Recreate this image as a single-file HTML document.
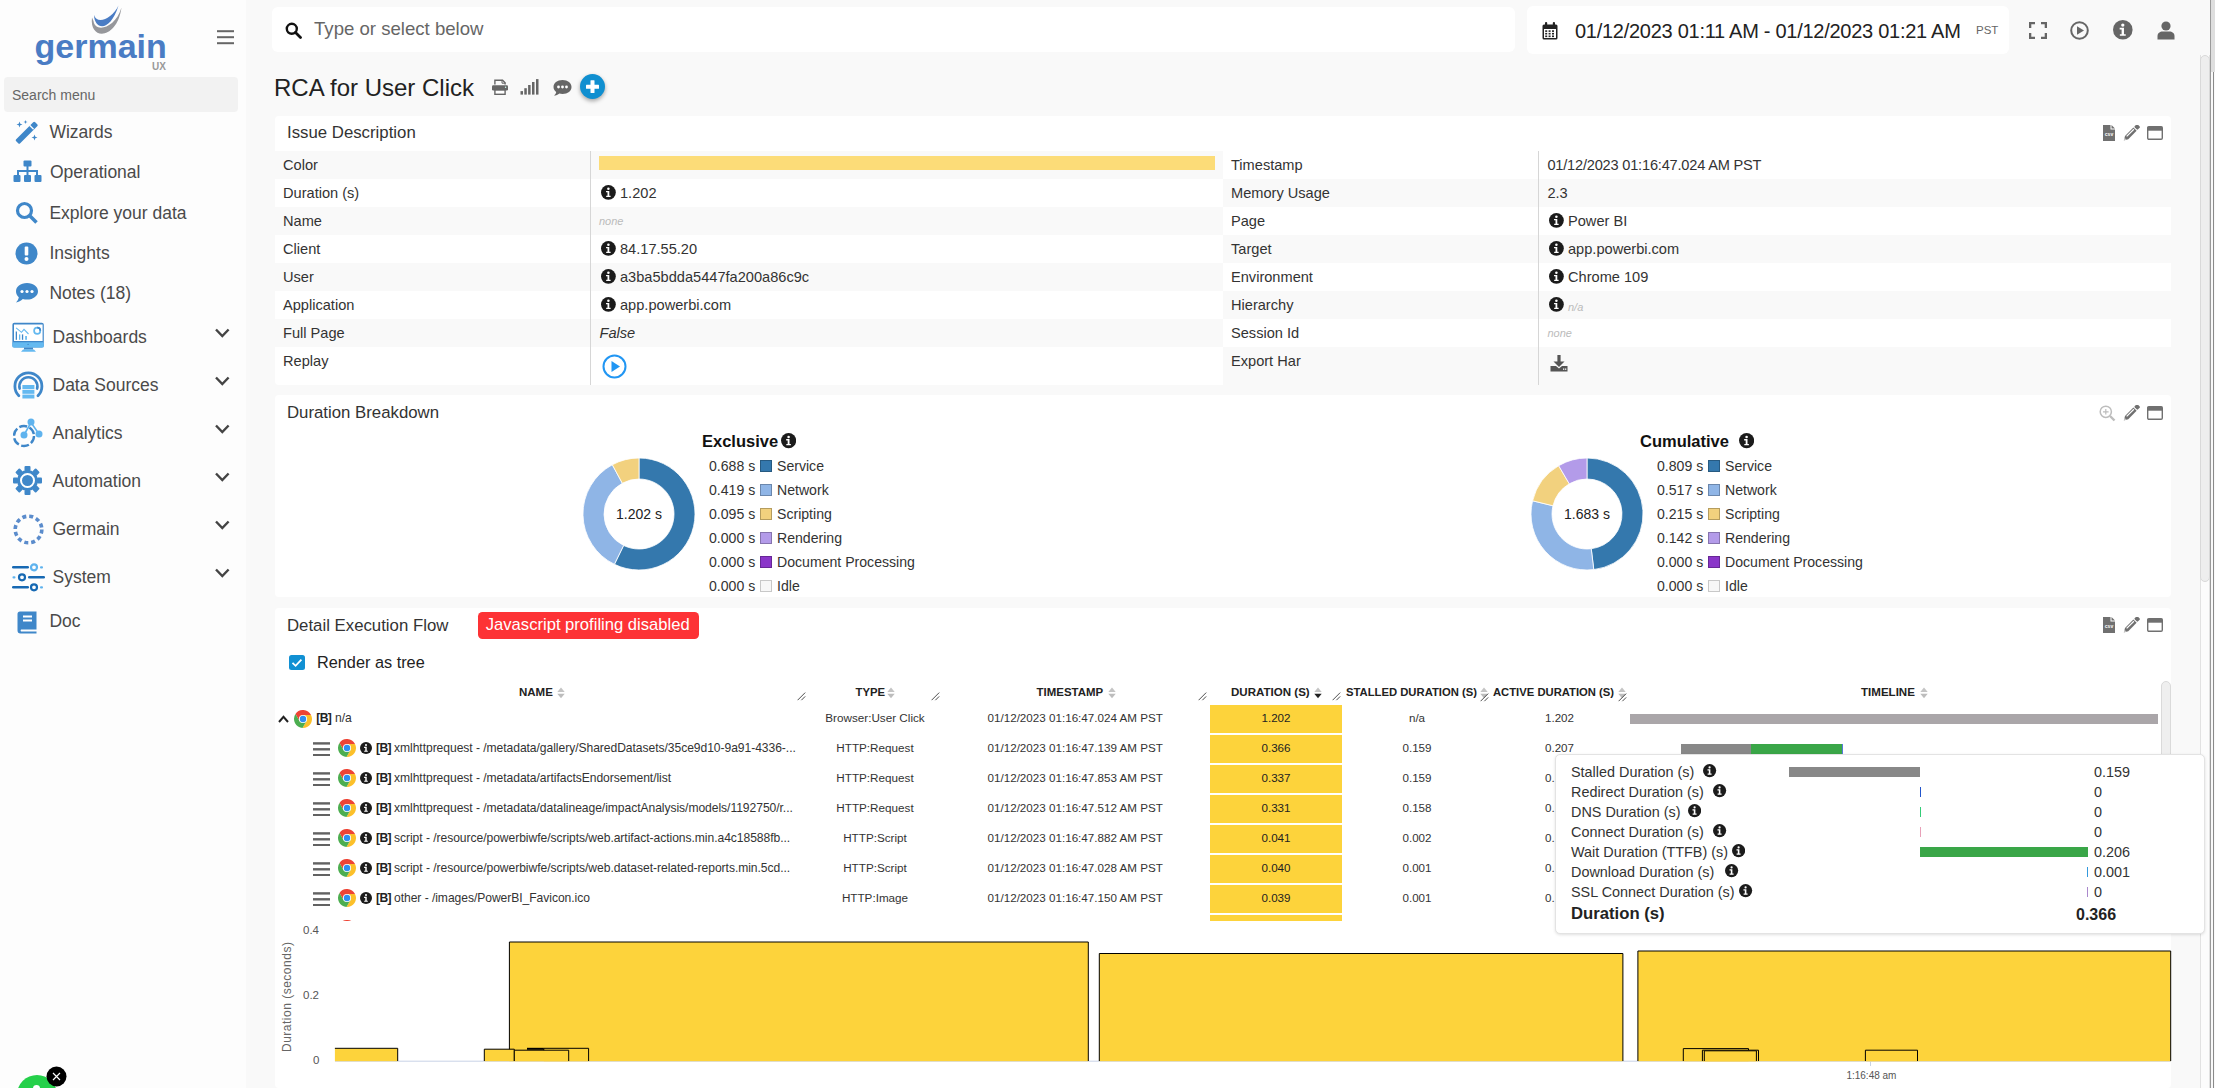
<!DOCTYPE html>
<html><head><meta charset="utf-8">
<style>
*{box-sizing:border-box;margin:0;padding:0}
html,body{width:2215px;height:1088px;overflow:hidden}
body{background:#f9f9f9;font-family:"Liberation Sans",sans-serif;color:#333;position:relative}
.a{position:absolute}
#side{left:0;top:0;width:246px;height:1088px;background:#fdfdfd}
.mi{position:absolute;left:0;font-size:17.5px;line-height:1;color:#4a4a4a;white-space:nowrap}
.chev{position:absolute;left:216px;width:10px;height:10px;border-right:2.5px solid #444;border-bottom:2.5px solid #444;transform:rotate(45deg)}
.panel{position:absolute;background:#fff;border-radius:4px}
.ptitle{position:absolute;left:12px;font-size:16px;color:#333;white-space:nowrap}
.row{position:absolute;height:28px}
.lbl{position:absolute;font-size:14px;color:#333;white-space:nowrap}
.ii{position:absolute;width:14px;height:14px;border-radius:50%;background:#1a1a1a;color:#fff;font:bold 10px/14px "Liberation Serif",serif;text-align:center}
</style></head><body>
<div id="side" class="a">
<svg class="a" style="left:30px;top:0px" width="142" height="70" viewBox="0 0 142 70">
<path d="M64 15 C64.5 30 80 33 88.5 5.5 C82 19 67 25 64 15 Z" fill="#4a7cc4"/>
<path d="M62 17.5 C59 41 87 40 91.5 7.5 C85 29 65 33 63.5 21 Z" fill="#96979b"/>
</svg>
<div class="a" style="left:34.5px;top:29px;font:bold 34px/1 'Liberation Sans',sans-serif;color:#4a7cc4;letter-spacing:0px">germain</div>
<div class="a" style="left:152px;top:61.5px;font:bold 10px/1 'Liberation Sans',sans-serif;color:#999">UX</div>
<svg class="a" style="left:216px;top:29px" width="19" height="16" viewBox="0 0 19 16"><rect x="1" y="1.2" width="17" height="2" fill="#666"/><rect x="1" y="7.2" width="17" height="2" fill="#666"/><rect x="1" y="13.2" width="17" height="2" fill="#666"/></svg>
<div class="a" style="left:4px;top:77px;width:234px;height:34.5px;background:#f2f2f2;border-radius:4px"></div>
<div class="a" style="left:12px;top:87.5px;font:14px/1 'Liberation Sans',sans-serif;color:#666">Search menu</div>
<!-- icons -->
<svg class="a" style="left:15px;top:120px" width="24" height="24" viewBox="0 0 24 24" fill="#3f87c9">
<path d="M1.2 19.2 L18.2 2.2 Q19.2 1.2 20.2 2.2 L22.2 4.2 Q23.2 5.2 22.2 6.2 L5.2 23.2 Q4.2 24.2 3.2 23.2 L1.2 21.2 Q0.2 20.2 1.2 19.2Z"/>
<path d="M14.6 5.2 L18.6 9.2" stroke="#fdfdfd" stroke-width="1.3"/>
<path d="M4.5 1.5 L5.3 3.7 L7.5 4.5 L5.3 5.3 L4.5 7.5 L3.7 5.3 L1.5 4.5 L3.7 3.7Z"/>
<path d="M10.5 0 L11 1.5 L12.5 2 L11 2.5 L10.5 4 L10 2.5 L8.5 2 L10 1.5Z"/>
<path d="M19.5 14.5 L20.3 16.7 L22.5 17.5 L20.3 18.3 L19.5 20.5 L18.7 18.3 L16.5 17.5 L18.7 16.7Z"/>
</svg>
<svg class="a" style="left:12.5px;top:160px" width="29" height="23" viewBox="0 0 29 23" fill="#3f87c9">
<rect x="10.5" y="0.5" width="8" height="6" rx="1"/><rect x="13.5" y="6" width="2" height="5"/>
<rect x="4" y="10" width="21" height="2"/><rect x="4" y="10" width="2" height="5"/><rect x="13.5" y="10" width="2" height="5"/><rect x="23" y="10" width="2" height="5"/>
<rect x="0.5" y="15" width="7" height="7" rx="1"/><rect x="11" y="15" width="7" height="7" rx="1"/><rect x="21.5" y="15" width="7" height="7" rx="1"/>
</svg>
<svg class="a" style="left:15px;top:201px" width="24" height="24" viewBox="0 0 24 24"><circle cx="9.5" cy="9.5" r="7" fill="none" stroke="#3f87c9" stroke-width="3.2"/><path d="M14.5 14.5 L21.5 21.5" stroke="#3f87c9" stroke-width="3.6"/></svg>
<svg class="a" style="left:15px;top:241.5px" width="23" height="23" viewBox="0 0 23 23"><circle cx="11.5" cy="11.5" r="11" fill="#3f87c9"/><rect x="9.7" y="4.5" width="3.6" height="9" rx="1" fill="#fff"/><circle cx="11.5" cy="17" r="2" fill="#fff"/></svg>
<svg class="a" style="left:15px;top:282px" width="24" height="22" viewBox="0 0 24 22"><path d="M12 1 C18.6 1 23 4.8 23 9.3 C23 13.8 18.6 17.6 12 17.6 C10.5 17.6 9 17.4 7.8 17 C6 18.6 3.5 20 1 20.5 C2.5 19 3.6 17 3.8 15.3 C2 13.8 1 11.7 1 9.3 C1 4.8 5.4 1 12 1Z" fill="#3f87c9"/><circle cx="7" cy="9.5" r="1.6" fill="#fff"/><circle cx="12" cy="9.5" r="1.6" fill="#fff"/><circle cx="17" cy="9.5" r="1.6" fill="#fff"/></svg>
<svg class="a" style="left:12px;top:322px" width="33" height="31" viewBox="0 0 33 31">
<rect x="0.4" y="0.8" width="31.4" height="24.8" rx="2" fill="#3f87c9"/><rect x="2" y="2.5" width="28.6" height="16.5" fill="#fff"/>
<rect x="0.4" y="20.3" width="31.4" height="5.3" rx="1" fill="#64b9f0"/><circle cx="16.1" cy="22.4" r="0.7" fill="#3f87c9"/>
<rect x="12" y="25.6" width="9" height="2" fill="#3f87c9"/><path d="M9 29.8 L11 27.5 H22 L24 29.8Z" fill="#64b9f0"/>
<path d="M4.1 5.8 L9.5 10.3 L12 7.4 L16.5 12" fill="none" stroke="#64b9f0" stroke-width="1.1"/>
<rect x="3.7" y="9.5" width="1.3" height="8.3" fill="#3f87c9"/><rect x="7" y="12.4" width="1.3" height="5.4" fill="#64b9f0"/><rect x="9.9" y="12.4" width="1.3" height="5.4" fill="#3f87c9"/><rect x="13.2" y="14" width="1.7" height="3.8" fill="#64b9f0"/>
<circle cx="25.2" cy="8.7" r="3.1" fill="none" stroke="#64b9f0" stroke-width="1.7"/><path d="M25.2 5.6 A3.1 3.1 0 0 1 28.3 8.7" fill="none" stroke="#3f87c9" stroke-width="1.7"/>
</svg>
<svg class="a" style="left:12.5px;top:370px" width="31" height="30" viewBox="0 0 31 30">
<path d="M5.85 25.85 A13.5 13.5 0 1 1 24.95 25.85" fill="none" stroke="#3f87c9" stroke-width="2.8" stroke-linecap="round"/>
<path d="M6.7 18.6 A9 9 0 1 1 24.1 18.6" fill="none" stroke="#3f87c9" stroke-width="2.6" stroke-linecap="round"/>
<rect x="9.4" y="15" width="12" height="4" fill="#64b9f0"/><rect x="9.4" y="19.8" width="12" height="4" fill="#64b9f0"/><rect x="9.4" y="24.6" width="12" height="3.9" fill="#64b9f0"/>
</svg>
<svg class="a" style="left:12.5px;top:418px" width="31" height="30" viewBox="0 0 31 30">
<circle cx="11" cy="18" r="10" fill="none" stroke="#3f87c9" stroke-width="2.4" stroke-dasharray="8 2.5"/>
<path d="M11 17 L18 4.5 L26 16" fill="none" stroke="#5fb3ee" stroke-width="1.6"/>
<circle cx="18" cy="4" r="3.5" fill="#5fb3ee"/><circle cx="11" cy="17" r="3.5" fill="#5fb3ee"/><circle cx="26" cy="16" r="3.5" fill="#5fb3ee"/>
</svg>
<svg class="a" style="left:13px;top:466px" width="29" height="29" viewBox="0 0 29 29">
<g fill="#3f87c9"><circle cx="14.5" cy="14.5" r="10.5"/>
<rect x="11.5" y="0" width="6" height="5" rx="1"/><rect x="11.5" y="24" width="6" height="5" rx="1"/><rect x="0" y="11.5" width="5" height="6" rx="1"/><rect x="24" y="11.5" width="5" height="6" rx="1"/>
<rect x="11.5" y="0" width="6" height="5" rx="1" transform="rotate(45 14.5 14.5)"/><rect x="11.5" y="24" width="6" height="5" rx="1" transform="rotate(45 14.5 14.5)"/><rect x="0" y="11.5" width="5" height="6" rx="1" transform="rotate(45 14.5 14.5)"/><rect x="24" y="11.5" width="5" height="6" rx="1" transform="rotate(45 14.5 14.5)"/></g>
<circle cx="14.5" cy="14.5" r="6.5" fill="none" stroke="#fff" stroke-width="2"/>
</svg>
<svg class="a" style="left:12.5px;top:513.5px" width="31" height="31" viewBox="0 0 31 31"><circle cx="15.5" cy="15.5" r="13.3" fill="none" stroke="#5b8ccc" stroke-width="3.6" stroke-dasharray="4 3"/></svg>
<svg class="a" style="left:11.5px;top:562.5px" width="33" height="29" viewBox="0 0 33 29">
<rect x="0" y="3" width="17" height="2.6" rx="1.3" fill="#1769b3"/><circle cx="22" cy="4.3" r="3" fill="none" stroke="#5fb3ee" stroke-width="2.2"/><rect x="28" y="3.2" width="3" height="2.2" rx="1" fill="#5fb3ee"/>
<rect x="0.5" y="13.2" width="3" height="2.2" rx="1" fill="#5fb3ee"/><circle cx="10" cy="14.3" r="3" fill="none" stroke="#1769b3" stroke-width="2.2"/><rect x="16" y="13" width="17" height="2.6" rx="1.3" fill="#1769b3"/>
<rect x="0" y="23" width="17" height="2.6" rx="1.3" fill="#1769b3"/><circle cx="22" cy="24.3" r="3" fill="none" stroke="#1769b3" stroke-width="2.2"/><rect x="28" y="23.2" width="3" height="2.2" rx="1" fill="#5fb3ee"/>
</svg>
<svg class="a" style="left:17px;top:610.5px" width="20" height="23" viewBox="0 0 20 23">
<path d="M3 0.5 H19.5 V18.5 H4 A1.5 1.5 0 0 0 4 20.5 H19.5 V22.5 H3.5 A3 3 0 0 1 0.5 19.5 V3 A2.5 2.5 0 0 1 3 0.5Z" fill="#3f87c9"/>
<rect x="6" y="4.5" width="9" height="2" fill="#fff"/><rect x="6" y="8.5" width="9" height="2" fill="#fff"/>
</svg>
<!-- chevrons -->
<svg class="a" style="left:215px;top:328px" width="15" height="275" viewBox="0 0 15 275" fill="none" stroke="#444" stroke-width="2.4">
<path d="M1 1.5 L7.3 8 L13.6 1.5"/><path d="M1 49.5 L7.3 56 L13.6 49.5"/><path d="M1 97.5 L7.3 104 L13.6 97.5"/><path d="M1 145.5 L7.3 152 L13.6 145.5"/><path d="M1 193.5 L7.3 200 L13.6 193.5"/><path d="M1 241.5 L7.3 248 L13.6 241.5"/>
</svg>
<div class="mi" style="left:49.4px;top:123.8px">Wizards</div>
<div class="mi" style="left:50px;top:164.3px">Operational</div>
<div class="mi" style="left:49.4px;top:205.3px">Explore your data</div>
<div class="mi" style="left:49.4px;top:245.3px">Insights</div>
<div class="mi" style="left:49.4px;top:285.3px">Notes (18)</div>
<div class="mi" style="left:52.5px;top:329.3px">Dashboards</div>
<div class="mi" style="left:52.5px;top:377.3px">Data Sources</div>
<div class="mi" style="left:52.5px;top:425.3px">Analytics</div>
<div class="mi" style="left:52.5px;top:473.3px">Automation</div>
<div class="mi" style="left:52.5px;top:521.3px">Germain</div>
<div class="mi" style="left:52.5px;top:569.3px">System</div>
<div class="mi" style="left:49.4px;top:613.3px">Doc</div>
<!-- chat bubble -->
<div class="a" style="left:17px;top:1075px;width:40px;height:40px;border-radius:50%;background:#25d04a"></div>
<div class="a" style="left:33px;top:1085px;width:7px;height:7px;border-radius:50%;background:#fff"></div>
<svg class="a" style="left:46px;top:1066px" width="21" height="21" viewBox="0 0 21 21"><circle cx="10.5" cy="10.5" r="10" fill="#000"/><path d="M7 7 L14 14 M14 7 L7 14" stroke="#fff" stroke-width="1.2"/></svg>
</div>
<div id="main"><svg width="0" height="0" style="position:absolute"><defs><symbol id="chr" viewBox="0 0 18 18"><path d="M9 9 L5.49 11.03 L1.47 4.07 A9 9 0 0 1 17.04 4.95 L9 4.95Z" fill="#ee4435"/><path d="M9 9 L9 4.95 L17.04 4.95 A9 9 0 0 1 8.49 17.98 L12.51 11.03Z" fill="#fcc02a"/><path d="M9 9 L12.51 11.03 L8.49 17.98 A9 9 0 0 1 1.47 4.07 L5.49 11.03Z" fill="#4cae50"/><circle cx="9" cy="9" r="4.1" fill="#fff"/><circle cx="9" cy="9" r="3.2" fill="#2f8ff0"/></symbol></defs></svg><div class="a" style="left:272px;top:7px;width:1243px;height:45px;background:#fff;border-radius:6px"></div><svg class="a" style="left:285px;top:22px" width="17" height="17" viewBox="0 0 17 17"><circle cx="6.8" cy="6.8" r="5" fill="none" stroke="#111" stroke-width="2.4"/><path d="M10.5 10.5 L15.5 15.5" stroke="#111" stroke-width="2.8" stroke-linecap="round"/></svg><div class="a" style="left:314.0px;top:20.1px;font-size:18.6px;line-height:1;color:#666;white-space:nowrap;">Type or select below</div><div class="a" style="left:1527px;top:5.5px;width:482px;height:48.5px;background:#fff;border-radius:6px"></div><svg class="a" style="left:1542px;top:22px" width="16" height="18" viewBox="0 0 16 18"><rect x="3" y="0" width="2.2" height="4" rx="1" fill="#222"/><rect x="10.8" y="0" width="2.2" height="4" rx="1" fill="#222"/><rect x="0.5" y="2.5" width="15" height="15" rx="1.5" fill="#222"/><rect x="2" y="7" width="12" height="9" fill="#fff"/><rect x="3.2" y="8.3" width="2" height="1.6" fill="#222"/><rect x="3.2" y="10.9" width="2" height="1.6" fill="#222"/><rect x="3.2" y="13.5" width="2" height="1.6" fill="#222"/><rect x="6.6" y="8.3" width="2" height="1.6" fill="#222"/><rect x="6.6" y="10.9" width="2" height="1.6" fill="#222"/><rect x="6.6" y="13.5" width="2" height="1.6" fill="#222"/><rect x="10.0" y="8.3" width="2" height="1.6" fill="#222"/><rect x="10.0" y="10.9" width="2" height="1.6" fill="#222"/><rect x="10.0" y="13.5" width="2" height="1.6" fill="#222"/></svg><div class="a" style="left:1575.0px;top:20.9px;font-size:20px;line-height:1;color:#222;white-space:nowrap;letter-spacing:-0.27px;">01/12/2023 01:11 AM - 01/12/2023 01:21 AM</div><div class="a" style="left:1976.0px;top:24.8px;font-size:11.5px;line-height:1;color:#666;white-space:nowrap;">PST</div><svg class="a" style="left:2029px;top:22px" width="18" height="17" viewBox="0 0 18 17"><path d="M1 6 V1 H6 M12 1 H17 V6 M17 11 V16 H12 M6 16 H1 V11" fill="none" stroke="#666" stroke-width="2.6"/></svg><svg class="a" style="left:2070px;top:21px" width="19" height="19" viewBox="0 0 19 19"><circle cx="9.5" cy="9.5" r="8.3" fill="none" stroke="#666" stroke-width="2"/><path d="M7 5.2 L14 9.5 L7 13.8Z" fill="#666"/></svg><svg class="a" style="left:2113.2px;top:20.4px" width="19.6" height="19.6" viewBox="0 0 19.6 19.6"><circle cx="9.8" cy="9.8" r="9.8" fill="#666"/><circle cx="9.8" cy="5.10" r="1.67" fill="#fff"/><path d="M6.66 7.84 H10.98 V14.21 H12.74 V15.88 H6.86 V14.21 H8.62 V9.60 H6.66Z" fill="#fff"/></svg><svg class="a" style="left:2157px;top:21px" width="18" height="19" viewBox="0 0 18 19"><circle cx="9" cy="5" r="4.6" fill="#666"/><path d="M0.5 18.5 V15 C0.5 12 3 10.5 5.5 10.5 H12.5 C15 10.5 17.5 12 17.5 15 V18.5Z" fill="#666"/></svg><div class="a" style="left:2200px;top:55px;width:10px;height:1040px;background:#fcfcfc;border-left:1px solid #e2e2e2;border-right:1px solid #e2e2e2"></div><div class="a" style="left:2200px;top:55px;width:10px;height:527px;background:#eeeeee;border:1px solid #d9d9d9;border-radius:5px"></div><div class="a" style="left:2210px;top:0px;width:1.2px;height:1088px;background:#9a9a9a;"></div><div class="a" style="left:2211.2px;top:0px;width:3.8px;height:72px;background:#dedede;"></div><div class="a" style="left:2213px;top:72px;width:1.2px;height:1016px;background:#8a8a8a;"></div><div class="a" style="left:274.0px;top:75.7px;font-size:24px;line-height:1;color:#222;white-space:nowrap;">RCA for User Click</div><svg class="a" style="left:492px;top:79px" width="16" height="16" viewBox="0 0 16 16"><path d="M2.9 5.6 V1.2 H10.6 L13.1 3.7 V5.6" fill="none" stroke="#666" stroke-width="1.4"/><path d="M10 0.9 V4.2 H13.1" fill="none" stroke="#666" stroke-width="1"/><rect x="0" y="6.2" width="16" height="5.2" rx="1.2" fill="#666"/><circle cx="13.6" cy="8.2" r="0.7" fill="#cfe"/><rect x="2.9" y="11" width="10.2" height="4.3" fill="#fff" stroke="#666" stroke-width="1.4"/></svg><svg class="a" style="left:520px;top:79px" width="20" height="16" viewBox="0 0 20 16"><rect x="0.5" y="12.1" width="2.5" height="3.5" fill="#666"/><rect x="4.3" y="9.2" width="2.5" height="6.4" fill="#666"/><rect x="8.1" y="6" width="2.5" height="9.6" fill="#666"/><rect x="12" y="3" width="2.5" height="12.6" fill="#666"/><rect x="16" y="0.1" width="2.5" height="15.5" fill="#666"/></svg><svg class="a" style="left:553px;top:79.3px" width="19" height="17" viewBox="0 0 19 17"><path d="M9.5 1 C14.8 1 18.5 4.2 18.5 8 C18.5 11.8 14.8 15 9.5 15 C8.4 15 7.4 14.8 6.4 14.5 C5 15.6 3 16.5 1 16.6 C2.3 15.6 3 14.3 3.2 13 C1.6 11.7 0.5 10 0.5 8 C0.5 4.2 4.2 1 9.5 1Z" fill="#666"/><circle cx="5.5" cy="8" r="1.4" fill="#fff"/><circle cx="9.5" cy="8" r="1.4" fill="#fff"/><circle cx="13.5" cy="8" r="1.4" fill="#fff"/></svg><div class="a" style="left:580px;top:74px;width:25px;height:25px;border-radius:50%;background:#108fd0;box-shadow:0 2px 4px rgba(0,0,0,0.35)"></div><svg class="a" style="left:585px;top:79px" width="15" height="15" viewBox="0 0 15 15"><rect x="5.5" y="1.3" width="4" height="12.6" rx="0.5" fill="#fff"/><rect x="1" y="5.7" width="13" height="4" rx="0.5" fill="#fff"/></svg><div class="a" style="left:275px;top:116px;width:1896px;height:269px;background:#fff;border-radius:4px"></div><div class="a" style="left:287.0px;top:124.8px;font-size:16.8px;line-height:1;color:#333;white-space:nowrap;">Issue Description</div><svg class="a" style="left:2103px;top:125px" width="13" height="16" viewBox="0 0 13 16"><path d="M0 0 H7.5 V4.5 H12 V16 H0Z" fill="#707070"/><path d="M8.5 0 L12 3.5 H8.5Z" fill="#707070"/><text x="6" y="11.2" font-family="Liberation Sans" font-size="5" font-weight="bold" fill="#fff" text-anchor="middle">csv</text></svg><svg class="a" style="left:2123px;top:125px" width="17" height="16" viewBox="0 0 17 16"><g transform="translate(8.3 7.9) rotate(-45)"><path d="M-10.6 0 L-6.6 -2.3 H5.2 V2.3 H-6.6Z" fill="#707070"/><rect x="6.3" y="-2.3" width="4.2" height="4.6" rx="1" fill="#707070"/><rect x="-5.8" y="-1.3" width="10.2" height="1.1" fill="#fff"/><path d="M-10.6 0 L-8.2 -1.4 V1.4Z" fill="#fff" opacity="0.6"/></g></svg><svg class="a" style="left:2147px;top:126px" width="16" height="14" viewBox="0 0 16 14"><rect x="0.7" y="0.7" width="14.6" height="12.6" rx="1.2" fill="none" stroke="#707070" stroke-width="1.4"/><rect x="0.7" y="0.7" width="14.6" height="4" fill="#707070"/></svg><div class="a" style="left:275px;top:151px;width:948px;height:28px;background:#f9f9f9;"></div><div class="a" style="left:1223px;top:179px;width:948px;height:28px;background:#f9f9f9;"></div><div class="a" style="left:275px;top:207px;width:948px;height:28px;background:#f9f9f9;"></div><div class="a" style="left:1223px;top:235px;width:948px;height:28px;background:#f9f9f9;"></div><div class="a" style="left:275px;top:263px;width:948px;height:28px;background:#f9f9f9;"></div><div class="a" style="left:1223px;top:291px;width:948px;height:28px;background:#f9f9f9;"></div><div class="a" style="left:275px;top:319px;width:948px;height:28px;background:#f9f9f9;"></div><div class="a" style="left:1223px;top:347px;width:948px;height:38px;background:#f9f9f9;"></div><div class="a" style="left:590px;top:151px;width:1px;height:234px;background:#d6d6d6;"></div><div class="a" style="left:1538px;top:151px;width:1px;height:234px;background:#d6d6d6;"></div><div class="a" style="left:283.0px;top:157.9px;font-size:14.6px;line-height:1;color:#333;white-space:nowrap;">Color</div><div class="a" style="left:1231.0px;top:157.9px;font-size:14.6px;line-height:1;color:#333;white-space:nowrap;">Timestamp</div><div class="a" style="left:283.0px;top:185.9px;font-size:14.6px;line-height:1;color:#333;white-space:nowrap;">Duration (s)</div><div class="a" style="left:1231.0px;top:185.9px;font-size:14.6px;line-height:1;color:#333;white-space:nowrap;">Memory Usage</div><div class="a" style="left:283.0px;top:213.9px;font-size:14.6px;line-height:1;color:#333;white-space:nowrap;">Name</div><div class="a" style="left:1231.0px;top:213.9px;font-size:14.6px;line-height:1;color:#333;white-space:nowrap;">Page</div><div class="a" style="left:283.0px;top:241.9px;font-size:14.6px;line-height:1;color:#333;white-space:nowrap;">Client</div><div class="a" style="left:1231.0px;top:241.9px;font-size:14.6px;line-height:1;color:#333;white-space:nowrap;">Target</div><div class="a" style="left:283.0px;top:269.9px;font-size:14.6px;line-height:1;color:#333;white-space:nowrap;">User</div><div class="a" style="left:1231.0px;top:269.9px;font-size:14.6px;line-height:1;color:#333;white-space:nowrap;">Environment</div><div class="a" style="left:283.0px;top:297.9px;font-size:14.6px;line-height:1;color:#333;white-space:nowrap;">Application</div><div class="a" style="left:1231.0px;top:297.9px;font-size:14.6px;line-height:1;color:#333;white-space:nowrap;">Hierarchy</div><div class="a" style="left:283.0px;top:325.9px;font-size:14.6px;line-height:1;color:#333;white-space:nowrap;">Full Page</div><div class="a" style="left:1231.0px;top:325.9px;font-size:14.6px;line-height:1;color:#333;white-space:nowrap;">Session Id</div><div class="a" style="left:283.0px;top:353.9px;font-size:14.6px;line-height:1;color:#333;white-space:nowrap;">Replay</div><div class="a" style="left:1231.0px;top:353.9px;font-size:14.6px;line-height:1;color:#333;white-space:nowrap;">Export Har</div><div class="a" style="left:599px;top:156px;width:616px;height:14px;background:#fcdc78;"></div><svg class="a" style="left:601.1px;top:185.4px" width="14.8" height="14.8" viewBox="0 0 14.8 14.8"><circle cx="7.4" cy="7.4" r="7.4" fill="#1b1b1b"/><circle cx="7.4" cy="3.85" r="1.26" fill="#fff"/><path d="M5.03 5.92 H8.29 V10.73 H9.62 V11.99 H5.18 V10.73 H6.51 V7.25 H5.03Z" fill="#fff"/></svg><div class="a" style="left:620.0px;top:185.9px;font-size:14.6px;line-height:1;color:#333;white-space:nowrap;">1.202</div><svg class="a" style="left:601.1px;top:241.4px" width="14.8" height="14.8" viewBox="0 0 14.8 14.8"><circle cx="7.4" cy="7.4" r="7.4" fill="#1b1b1b"/><circle cx="7.4" cy="3.85" r="1.26" fill="#fff"/><path d="M5.03 5.92 H8.29 V10.73 H9.62 V11.99 H5.18 V10.73 H6.51 V7.25 H5.03Z" fill="#fff"/></svg><div class="a" style="left:620.0px;top:241.9px;font-size:14.6px;line-height:1;color:#333;white-space:nowrap;">84.17.55.20</div><svg class="a" style="left:601.1px;top:269.40000000000003px" width="14.8" height="14.8" viewBox="0 0 14.8 14.8"><circle cx="7.4" cy="7.4" r="7.4" fill="#1b1b1b"/><circle cx="7.4" cy="3.85" r="1.26" fill="#fff"/><path d="M5.03 5.92 H8.29 V10.73 H9.62 V11.99 H5.18 V10.73 H6.51 V7.25 H5.03Z" fill="#fff"/></svg><div class="a" style="left:620.0px;top:269.9px;font-size:14.6px;line-height:1;color:#333;white-space:nowrap;">a3ba5bdda5447fa200a86c9c</div><svg class="a" style="left:601.1px;top:297.40000000000003px" width="14.8" height="14.8" viewBox="0 0 14.8 14.8"><circle cx="7.4" cy="7.4" r="7.4" fill="#1b1b1b"/><circle cx="7.4" cy="3.85" r="1.26" fill="#fff"/><path d="M5.03 5.92 H8.29 V10.73 H9.62 V11.99 H5.18 V10.73 H6.51 V7.25 H5.03Z" fill="#fff"/></svg><div class="a" style="left:620.0px;top:297.9px;font-size:14.6px;line-height:1;color:#333;white-space:nowrap;">app.powerbi.com</div><div class="a" style="left:599.0px;top:216.2px;font-size:11px;line-height:1;color:#bbb;white-space:nowrap;font-style:italic;">none</div><div class="a" style="left:599.5px;top:325.9px;font-size:14.6px;line-height:1;color:#333;white-space:nowrap;font-style:italic;">False</div><svg class="a" style="left:602px;top:354px" width="25" height="25" viewBox="0 0 25 25"><circle cx="12.5" cy="12.5" r="11" fill="none" stroke="#2196f3" stroke-width="2"/><path d="M9.5 7 L18 12.5 L9.5 18Z" fill="#2196f3"/></svg><div class="a" style="left:1547.4px;top:158.0px;font-size:14.6px;line-height:1;color:#333;white-space:nowrap;letter-spacing:-0.2px;">01/12/2023 01:16:47.024 AM PST</div><div class="a" style="left:1547.4px;top:185.8px;font-size:14.6px;line-height:1;color:#333;white-space:nowrap;">2.3</div><svg class="a" style="left:1549.1px;top:213.4px" width="14.8" height="14.8" viewBox="0 0 14.8 14.8"><circle cx="7.4" cy="7.4" r="7.4" fill="#1b1b1b"/><circle cx="7.4" cy="3.85" r="1.26" fill="#fff"/><path d="M5.03 5.92 H8.29 V10.73 H9.62 V11.99 H5.18 V10.73 H6.51 V7.25 H5.03Z" fill="#fff"/></svg><div class="a" style="left:1568.0px;top:213.9px;font-size:14.6px;line-height:1;color:#333;white-space:nowrap;">Power BI</div><svg class="a" style="left:1549.1px;top:241.4px" width="14.8" height="14.8" viewBox="0 0 14.8 14.8"><circle cx="7.4" cy="7.4" r="7.4" fill="#1b1b1b"/><circle cx="7.4" cy="3.85" r="1.26" fill="#fff"/><path d="M5.03 5.92 H8.29 V10.73 H9.62 V11.99 H5.18 V10.73 H6.51 V7.25 H5.03Z" fill="#fff"/></svg><div class="a" style="left:1568.0px;top:241.9px;font-size:14.6px;line-height:1;color:#333;white-space:nowrap;">app.powerbi.com</div><svg class="a" style="left:1549.1px;top:269.40000000000003px" width="14.8" height="14.8" viewBox="0 0 14.8 14.8"><circle cx="7.4" cy="7.4" r="7.4" fill="#1b1b1b"/><circle cx="7.4" cy="3.85" r="1.26" fill="#fff"/><path d="M5.03 5.92 H8.29 V10.73 H9.62 V11.99 H5.18 V10.73 H6.51 V7.25 H5.03Z" fill="#fff"/></svg><div class="a" style="left:1568.0px;top:269.9px;font-size:14.6px;line-height:1;color:#333;white-space:nowrap;">Chrome 109</div><svg class="a" style="left:1549.1px;top:297.40000000000003px" width="14.8" height="14.8" viewBox="0 0 14.8 14.8"><circle cx="7.4" cy="7.4" r="7.4" fill="#1b1b1b"/><circle cx="7.4" cy="3.85" r="1.26" fill="#fff"/><path d="M5.03 5.92 H8.29 V10.73 H9.62 V11.99 H5.18 V10.73 H6.51 V7.25 H5.03Z" fill="#fff"/></svg><div class="a" style="left:1568.0px;top:301.7px;font-size:11px;line-height:1;color:#bbb;white-space:nowrap;font-style:italic;">n/a</div><div class="a" style="left:1547.4px;top:328.2px;font-size:11px;line-height:1;color:#bbb;white-space:nowrap;font-style:italic;">none</div><svg class="a" style="left:1550px;top:355px" width="18" height="17" viewBox="0 0 18 17"><rect x="7.4" y="0" width="3.2" height="8" fill="#555"/><path d="M3.5 6.5 H14.5 L9 12Z" fill="#555"/><path d="M0.5 11 H6 L9 13.5 L12 11 H17.5 V16.5 H0.5Z" fill="#555"/><rect x="13" y="13.5" width="1.3" height="1.3" fill="#fff"/><rect x="15" y="13.5" width="1.3" height="1.3" fill="#fff"/></svg><div class="a" style="left:275px;top:395px;width:1896px;height:202px;background:#fff;border-radius:4px"></div><div class="a" style="left:287.0px;top:404.8px;font-size:16.8px;line-height:1;color:#333;white-space:nowrap;">Duration Breakdown</div><svg class="a" style="left:2099px;top:405px" width="17" height="17" viewBox="0 0 17 17"><circle cx="6.8" cy="6.8" r="5.6" fill="none" stroke="#bdbdbd" stroke-width="1.5"/><path d="M6.8 4 V9.6 M4 6.8 H9.6" stroke="#bdbdbd" stroke-width="1.2"/><path d="M11 11 L15.5 15.5" stroke="#bdbdbd" stroke-width="2.4"/></svg><svg class="a" style="left:2123px;top:405px" width="17" height="16" viewBox="0 0 17 16"><g transform="translate(8.3 7.9) rotate(-45)"><path d="M-10.6 0 L-6.6 -2.3 H5.2 V2.3 H-6.6Z" fill="#707070"/><rect x="6.3" y="-2.3" width="4.2" height="4.6" rx="1" fill="#707070"/><rect x="-5.8" y="-1.3" width="10.2" height="1.1" fill="#fff"/><path d="M-10.6 0 L-8.2 -1.4 V1.4Z" fill="#fff" opacity="0.6"/></g></svg><svg class="a" style="left:2147px;top:406px" width="16" height="14" viewBox="0 0 16 14"><rect x="0.7" y="0.7" width="14.6" height="12.6" rx="1.2" fill="none" stroke="#707070" stroke-width="1.4"/><rect x="0.7" y="0.7" width="14.6" height="4" fill="#707070"/></svg><svg class="a" style="left:579px;top:454px" width="120" height="120" viewBox="0 0 120 120"><path d="M60.00 4.00 A56 56 0 1 1 35.40 110.31 L44.63 91.44 A35 35 0 1 0 60.00 25.00Z" fill="#3478ad" stroke="#fff" stroke-width="0.8"/><path d="M35.40 110.31 A56 56 0 0 1 33.32 10.76 L43.32 29.23 A35 35 0 0 0 44.63 91.44Z" fill="#8fb5e6" stroke="#fff" stroke-width="0.8"/><path d="M33.32 10.76 A56 56 0 0 1 60.00 4.00 L60.00 25.00 A35 35 0 0 0 43.32 29.23Z" fill="#f2d17e" stroke="#fff" stroke-width="0.8"/></svg><div class="a" style="left:139.0px;width:1000px;text-align:center;top:506.5px;font-size:14px;line-height:1;color:#222;white-space:nowrap;">1.202 s</div><div class="a" style="left:702.0px;top:433.0px;font-size:16.5px;line-height:1;color:#111;white-space:nowrap;font-weight:bold;">Exclusive</div><svg class="a" style="left:780.9px;top:433.4px" width="15.2" height="15.2" viewBox="0 0 15.2 15.2"><circle cx="7.6" cy="7.6" r="7.6" fill="#1b1b1b"/><circle cx="7.6" cy="3.95" r="1.29" fill="#fff"/><path d="M5.17 6.08 H8.51 V11.02 H9.88 V12.31 H5.32 V11.02 H6.69 V7.45 H5.17Z" fill="#fff"/></svg><div class="a" style="left:709.0px;top:459.1px;font-size:14.1px;line-height:1;color:#333;white-space:nowrap;">0.688 s</div><div class="a" style="left:760px;top:460px;width:12px;height:12px;background:#3478ad;border:1px solid rgba(0,0,0,0.25)"></div><div class="a" style="left:777.0px;top:459.1px;font-size:14.1px;line-height:1;color:#333;white-space:nowrap;">Service</div><div class="a" style="left:709.0px;top:483.1px;font-size:14.1px;line-height:1;color:#333;white-space:nowrap;">0.419 s</div><div class="a" style="left:760px;top:484px;width:12px;height:12px;background:#8fb5e6;border:1px solid rgba(0,0,0,0.25)"></div><div class="a" style="left:777.0px;top:483.1px;font-size:14.1px;line-height:1;color:#333;white-space:nowrap;">Network</div><div class="a" style="left:709.0px;top:507.1px;font-size:14.1px;line-height:1;color:#333;white-space:nowrap;">0.095 s</div><div class="a" style="left:760px;top:508px;width:12px;height:12px;background:#f2d17e;border:1px solid rgba(0,0,0,0.25)"></div><div class="a" style="left:777.0px;top:507.1px;font-size:14.1px;line-height:1;color:#333;white-space:nowrap;">Scripting</div><div class="a" style="left:709.0px;top:531.1px;font-size:14.1px;line-height:1;color:#333;white-space:nowrap;">0.000 s</div><div class="a" style="left:760px;top:532px;width:12px;height:12px;background:#b39be9;border:1px solid rgba(0,0,0,0.25)"></div><div class="a" style="left:777.0px;top:531.1px;font-size:14.1px;line-height:1;color:#333;white-space:nowrap;">Rendering</div><div class="a" style="left:709.0px;top:555.1px;font-size:14.1px;line-height:1;color:#333;white-space:nowrap;">0.000 s</div><div class="a" style="left:760px;top:556px;width:12px;height:12px;background:#8a35c9;border:1px solid rgba(0,0,0,0.25)"></div><div class="a" style="left:777.0px;top:555.1px;font-size:14.1px;line-height:1;color:#333;white-space:nowrap;">Document Processing</div><div class="a" style="left:709.0px;top:579.1px;font-size:14.1px;line-height:1;color:#333;white-space:nowrap;">0.000 s</div><div class="a" style="left:760px;top:580px;width:12px;height:12px;background:#f7f7f7;border:1px solid #c8c8c8"></div><div class="a" style="left:777.0px;top:579.1px;font-size:14.1px;line-height:1;color:#333;white-space:nowrap;">Idle</div><svg class="a" style="left:1527px;top:454px" width="120" height="120" viewBox="0 0 120 120"><path d="M60.00 4.00 A56 56 0 0 1 66.78 115.59 L64.24 94.74 A35 35 0 0 0 60.00 25.00Z" fill="#3478ad" stroke="#fff" stroke-width="0.8"/><path d="M66.78 115.59 A56 56 0 0 1 5.58 46.80 L25.99 51.75 A35 35 0 0 0 64.24 94.74Z" fill="#8fb5e6" stroke="#fff" stroke-width="0.8"/><path d="M5.58 46.80 A56 56 0 0 1 31.68 11.69 L42.30 29.80 A35 35 0 0 0 25.99 51.75Z" fill="#f2d17e" stroke="#fff" stroke-width="0.8"/><path d="M31.68 11.69 A56 56 0 0 1 60.00 4.00 L60.00 25.00 A35 35 0 0 0 42.30 29.80Z" fill="#b39be9" stroke="#fff" stroke-width="0.8"/></svg><div class="a" style="left:1087.0px;width:1000px;text-align:center;top:506.5px;font-size:14px;line-height:1;color:#222;white-space:nowrap;">1.683 s</div><div class="a" style="left:1640.0px;top:433.0px;font-size:16.5px;line-height:1;color:#111;white-space:nowrap;font-weight:bold;">Cumulative</div><svg class="a" style="left:1738.9px;top:433.4px" width="15.2" height="15.2" viewBox="0 0 15.2 15.2"><circle cx="7.6" cy="7.6" r="7.6" fill="#1b1b1b"/><circle cx="7.6" cy="3.95" r="1.29" fill="#fff"/><path d="M5.17 6.08 H8.51 V11.02 H9.88 V12.31 H5.32 V11.02 H6.69 V7.45 H5.17Z" fill="#fff"/></svg><div class="a" style="left:1657.0px;top:459.1px;font-size:14.1px;line-height:1;color:#333;white-space:nowrap;">0.809 s</div><div class="a" style="left:1708px;top:460px;width:12px;height:12px;background:#3478ad;border:1px solid rgba(0,0,0,0.25)"></div><div class="a" style="left:1725.0px;top:459.1px;font-size:14.1px;line-height:1;color:#333;white-space:nowrap;">Service</div><div class="a" style="left:1657.0px;top:483.1px;font-size:14.1px;line-height:1;color:#333;white-space:nowrap;">0.517 s</div><div class="a" style="left:1708px;top:484px;width:12px;height:12px;background:#8fb5e6;border:1px solid rgba(0,0,0,0.25)"></div><div class="a" style="left:1725.0px;top:483.1px;font-size:14.1px;line-height:1;color:#333;white-space:nowrap;">Network</div><div class="a" style="left:1657.0px;top:507.1px;font-size:14.1px;line-height:1;color:#333;white-space:nowrap;">0.215 s</div><div class="a" style="left:1708px;top:508px;width:12px;height:12px;background:#f2d17e;border:1px solid rgba(0,0,0,0.25)"></div><div class="a" style="left:1725.0px;top:507.1px;font-size:14.1px;line-height:1;color:#333;white-space:nowrap;">Scripting</div><div class="a" style="left:1657.0px;top:531.1px;font-size:14.1px;line-height:1;color:#333;white-space:nowrap;">0.142 s</div><div class="a" style="left:1708px;top:532px;width:12px;height:12px;background:#b39be9;border:1px solid rgba(0,0,0,0.25)"></div><div class="a" style="left:1725.0px;top:531.1px;font-size:14.1px;line-height:1;color:#333;white-space:nowrap;">Rendering</div><div class="a" style="left:1657.0px;top:555.1px;font-size:14.1px;line-height:1;color:#333;white-space:nowrap;">0.000 s</div><div class="a" style="left:1708px;top:556px;width:12px;height:12px;background:#8a35c9;border:1px solid rgba(0,0,0,0.25)"></div><div class="a" style="left:1725.0px;top:555.1px;font-size:14.1px;line-height:1;color:#333;white-space:nowrap;">Document Processing</div><div class="a" style="left:1657.0px;top:579.1px;font-size:14.1px;line-height:1;color:#333;white-space:nowrap;">0.000 s</div><div class="a" style="left:1708px;top:580px;width:12px;height:12px;background:#f7f7f7;border:1px solid #c8c8c8"></div><div class="a" style="left:1725.0px;top:579.1px;font-size:14.1px;line-height:1;color:#333;white-space:nowrap;">Idle</div><div class="a" style="left:275px;top:608px;width:1896px;height:480px;background:#fff;border-radius:4px"></div><div class="a" style="left:287.0px;top:617.8px;font-size:16.8px;line-height:1;color:#333;white-space:nowrap;">Detail Execution Flow</div><div class="a" style="left:478px;top:612px;width:221px;height:27px;background:#fd3235;border-radius:4.5px"></div><div class="a" style="left:485.8px;top:617.3px;font-size:16.6px;line-height:1;color:#fff;white-space:nowrap;">Javascript profiling disabled</div><svg class="a" style="left:2103px;top:617px" width="13" height="16" viewBox="0 0 13 16"><path d="M0 0 H7.5 V4.5 H12 V16 H0Z" fill="#707070"/><path d="M8.5 0 L12 3.5 H8.5Z" fill="#707070"/><text x="6" y="11.2" font-family="Liberation Sans" font-size="5" font-weight="bold" fill="#fff" text-anchor="middle">csv</text></svg><svg class="a" style="left:2123px;top:617px" width="17" height="16" viewBox="0 0 17 16"><g transform="translate(8.3 7.9) rotate(-45)"><path d="M-10.6 0 L-6.6 -2.3 H5.2 V2.3 H-6.6Z" fill="#707070"/><rect x="6.3" y="-2.3" width="4.2" height="4.6" rx="1" fill="#707070"/><rect x="-5.8" y="-1.3" width="10.2" height="1.1" fill="#fff"/><path d="M-10.6 0 L-8.2 -1.4 V1.4Z" fill="#fff" opacity="0.6"/></g></svg><svg class="a" style="left:2147px;top:618px" width="16" height="14" viewBox="0 0 16 14"><rect x="0.7" y="0.7" width="14.6" height="12.6" rx="1.2" fill="none" stroke="#707070" stroke-width="1.4"/><rect x="0.7" y="0.7" width="14.6" height="4" fill="#707070"/></svg><div class="a" style="left:289px;top:654.5px;width:15.5px;height:15px;background:#1190d3;border-radius:2.5px"></div><svg class="a" style="left:289px;top:654.5px" width="16" height="15" viewBox="0 0 16 15"><path d="M3.5 7.8 L6.6 10.8 L12.4 4.6" fill="none" stroke="#fff" stroke-width="1.8"/></svg><div class="a" style="left:317.0px;top:654.2px;font-size:16.3px;line-height:1;color:#222;white-space:nowrap;">Render as tree</div><div class="a" style="left:519.0px;top:686.6px;font-size:11.5px;line-height:1;color:#222;white-space:nowrap;font-weight:bold;">NAME</div><div class="a" style="left:855.5px;top:686.7px;font-size:11.3px;line-height:1;color:#222;white-space:nowrap;font-weight:bold;">TYPE</div><div class="a" style="left:1036.6px;top:686.6px;font-size:11.45px;line-height:1;color:#222;white-space:nowrap;font-weight:bold;">TIMESTAMP</div><div class="a" style="left:1231.0px;top:686.5px;font-size:11.55px;line-height:1;color:#222;white-space:nowrap;font-weight:bold;">DURATION (S)</div><div class="a" style="left:1346.0px;top:686.8px;font-size:11.27px;line-height:1;color:#222;white-space:nowrap;font-weight:bold;">STALLED DURATION (S)</div><div class="a" style="left:1493.0px;top:686.8px;font-size:11.25px;line-height:1;color:#222;white-space:nowrap;font-weight:bold;">ACTIVE DURATION (S)</div><div class="a" style="left:1861.0px;top:686.5px;font-size:11.55px;line-height:1;color:#222;white-space:nowrap;font-weight:bold;">TIMELINE</div><svg class="a" style="left:556.5px;top:687px" width="8" height="12" viewBox="0 0 8 12"><path d="M0.3 5 L4 0.6 L7.7 5Z" fill="#c4c4c4"/><path d="M0.3 6.8 L4 11.2 L7.7 6.8Z" fill="#bdbdbd"/></svg><svg class="a" style="left:887px;top:687px" width="8" height="12" viewBox="0 0 8 12"><path d="M0.3 5 L4 0.6 L7.7 5Z" fill="#c4c4c4"/><path d="M0.3 6.8 L4 11.2 L7.7 6.8Z" fill="#bdbdbd"/></svg><svg class="a" style="left:1107.5px;top:687px" width="8" height="12" viewBox="0 0 8 12"><path d="M0.3 5 L4 0.6 L7.7 5Z" fill="#c4c4c4"/><path d="M0.3 6.8 L4 11.2 L7.7 6.8Z" fill="#bdbdbd"/></svg><svg class="a" style="left:1313.5px;top:687px" width="8" height="12" viewBox="0 0 8 12"><path d="M0.3 5 L4 0.6 L7.7 5Z" fill="#c4c4c4"/><path d="M0.3 6.8 L4 11.2 L7.7 6.8Z" fill="#222"/></svg><svg class="a" style="left:1480px;top:687px" width="8" height="12" viewBox="0 0 8 12"><path d="M0.3 5 L4 0.6 L7.7 5Z" fill="#c4c4c4"/><path d="M0.3 6.8 L4 11.2 L7.7 6.8Z" fill="#bdbdbd"/></svg><svg class="a" style="left:1618px;top:687px" width="8" height="12" viewBox="0 0 8 12"><path d="M0.3 5 L4 0.6 L7.7 5Z" fill="#c4c4c4"/><path d="M0.3 6.8 L4 11.2 L7.7 6.8Z" fill="#bdbdbd"/></svg><svg class="a" style="left:1919.5px;top:687px" width="8" height="12" viewBox="0 0 8 12"><path d="M0.3 5 L4 0.6 L7.7 5Z" fill="#c4c4c4"/><path d="M0.3 6.8 L4 11.2 L7.7 6.8Z" fill="#bdbdbd"/></svg><svg class="a" style="left:796.5px;top:692.3px" width="9" height="9" viewBox="0 0 9 9"><path d="M0.6 8.2 L8.2 0.6 M4.4 8.2 L8.2 4.4" stroke="#3a3a3a" stroke-width="0.9"/></svg><svg class="a" style="left:931px;top:692.3px" width="9" height="9" viewBox="0 0 9 9"><path d="M0.6 8.2 L8.2 0.6 M4.4 8.2 L8.2 4.4" stroke="#3a3a3a" stroke-width="0.9"/></svg><svg class="a" style="left:1197.5px;top:692.3px" width="9" height="9" viewBox="0 0 9 9"><path d="M0.6 8.2 L8.2 0.6 M4.4 8.2 L8.2 4.4" stroke="#3a3a3a" stroke-width="0.9"/></svg><svg class="a" style="left:1332px;top:692.3px" width="9" height="9" viewBox="0 0 9 9"><path d="M0.6 8.2 L8.2 0.6 M4.4 8.2 L8.2 4.4" stroke="#3a3a3a" stroke-width="0.9"/></svg><svg class="a" style="left:1479.5px;top:693px" width="9" height="9" viewBox="0 0 9 9"><path d="M0.6 8.2 L8.2 0.6 M4.4 8.2 L8.2 4.4" stroke="#3a3a3a" stroke-width="0.9"/></svg><svg class="a" style="left:1617.5px;top:693px" width="9" height="9" viewBox="0 0 9 9"><path d="M0.6 8.2 L8.2 0.6 M4.4 8.2 L8.2 4.4" stroke="#3a3a3a" stroke-width="0.9"/></svg><div class="a" style="left:2161px;top:681px;width:10px;height:80px;background:#efefef;border:1px solid #dadada;border-radius:5px"></div><div class="a" style="left:1210px;top:705px;width:132px;height:28px;background:#fdd33b;"></div><div class="a" style="left:776.0px;width:1000px;text-align:center;top:712.2px;font-size:11.6px;line-height:1;color:#222;white-space:nowrap;">1.202</div><div class="a" style="left:375.0px;width:1000px;text-align:center;top:712.1px;font-size:11.7px;line-height:1;color:#333;white-space:nowrap;">Browser:User Click</div><div class="a" style="left:987.5px;top:712.1px;font-size:11.65px;line-height:1;color:#333;white-space:nowrap;">01/12/2023 01:16:47.024 AM PST</div><div class="a" style="left:917.0px;width:1000px;text-align:center;top:712.2px;font-size:11.6px;line-height:1;color:#333;white-space:nowrap;">n/a</div><div class="a" style="left:1545.0px;top:712.2px;font-size:11.6px;line-height:1;color:#333;white-space:nowrap;">1.202</div><svg class="a" style="left:277.5px;top:714.5px" width="11" height="8" viewBox="0 0 11 8"><path d="M1 7 L5.5 1.8 L10 7" fill="none" stroke="#222" stroke-width="2"/></svg><svg class="a" style="left:294px;top:710px" width="18" height="18"><use href="#chr"/></svg><div class="a" style="left:316.3px;top:711.8px;font-size:12.1px;line-height:1;color:#222;white-space:nowrap;font-weight:bold;letter-spacing:-0.6px;">[B]</div><div class="a" style="left:335.0px;top:711.8px;font-size:12.1px;line-height:1;color:#333;white-space:nowrap;">n/a</div><div class="a" style="left:1210px;top:735px;width:132px;height:28px;background:#fdd33b;"></div><div class="a" style="left:776.0px;width:1000px;text-align:center;top:742.2px;font-size:11.6px;line-height:1;color:#222;white-space:nowrap;">0.366</div><div class="a" style="left:375.0px;width:1000px;text-align:center;top:742.1px;font-size:11.7px;line-height:1;color:#333;white-space:nowrap;">HTTP:Request</div><div class="a" style="left:987.5px;top:742.1px;font-size:11.65px;line-height:1;color:#333;white-space:nowrap;">01/12/2023 01:16:47.139 AM PST</div><div class="a" style="left:917.0px;width:1000px;text-align:center;top:742.2px;font-size:11.6px;line-height:1;color:#333;white-space:nowrap;">0.159</div><div class="a" style="left:1545.0px;top:742.2px;font-size:11.6px;line-height:1;color:#333;white-space:nowrap;">0.207</div><svg class="a" style="left:313.4px;top:740.5px" width="17" height="15" viewBox="0 0 17 15"><rect x="0" y="1.2" width="17" height="2.4" fill="#626262"/><rect x="0" y="7.1" width="17" height="2.4" fill="#626262"/><rect x="0" y="13" width="17" height="2.4" fill="#626262"/></svg><svg class="a" style="left:338px;top:739.2px" width="18" height="18"><use href="#chr"/></svg><svg class="a" style="left:360px;top:742px" width="12" height="12" viewBox="0 0 12 12"><circle cx="6" cy="6" r="6" fill="#1b1b1b"/><circle cx="6" cy="3.12" r="1.02" fill="#fff"/><path d="M4.08 4.80 H6.72 V8.70 H7.80 V9.72 H4.20 V8.70 H5.28 V5.88 H4.08Z" fill="#fff"/></svg><div class="a" style="left:376.0px;top:741.8px;font-size:12.1px;line-height:1;color:#222;white-space:nowrap;font-weight:bold;letter-spacing:-0.6px;">[B]</div><div class="a" style="left:394.0px;top:741.8px;font-size:12.1px;line-height:1;color:#333;white-space:nowrap;letter-spacing:-0.05px;">xmlhttprequest - /metadata/gallery/SharedDatasets/35ce9d10-9a91-4336-...</div><div class="a" style="left:1210px;top:765px;width:132px;height:28px;background:#fdd33b;"></div><div class="a" style="left:776.0px;width:1000px;text-align:center;top:772.2px;font-size:11.6px;line-height:1;color:#222;white-space:nowrap;">0.337</div><div class="a" style="left:375.0px;width:1000px;text-align:center;top:772.1px;font-size:11.7px;line-height:1;color:#333;white-space:nowrap;">HTTP:Request</div><div class="a" style="left:987.5px;top:772.1px;font-size:11.65px;line-height:1;color:#333;white-space:nowrap;">01/12/2023 01:16:47.853 AM PST</div><div class="a" style="left:917.0px;width:1000px;text-align:center;top:772.2px;font-size:11.6px;line-height:1;color:#333;white-space:nowrap;">0.159</div><div class="a" style="left:1545.0px;top:772.2px;font-size:11.6px;line-height:1;color:#333;white-space:nowrap;">0.</div><svg class="a" style="left:313.4px;top:770.5px" width="17" height="15" viewBox="0 0 17 15"><rect x="0" y="1.2" width="17" height="2.4" fill="#626262"/><rect x="0" y="7.1" width="17" height="2.4" fill="#626262"/><rect x="0" y="13" width="17" height="2.4" fill="#626262"/></svg><svg class="a" style="left:338px;top:769.2px" width="18" height="18"><use href="#chr"/></svg><svg class="a" style="left:360px;top:772px" width="12" height="12" viewBox="0 0 12 12"><circle cx="6" cy="6" r="6" fill="#1b1b1b"/><circle cx="6" cy="3.12" r="1.02" fill="#fff"/><path d="M4.08 4.80 H6.72 V8.70 H7.80 V9.72 H4.20 V8.70 H5.28 V5.88 H4.08Z" fill="#fff"/></svg><div class="a" style="left:376.0px;top:771.8px;font-size:12.1px;line-height:1;color:#222;white-space:nowrap;font-weight:bold;letter-spacing:-0.6px;">[B]</div><div class="a" style="left:394.0px;top:771.8px;font-size:12.1px;line-height:1;color:#333;white-space:nowrap;letter-spacing:-0.05px;">xmlhttprequest - /metadata/artifactsEndorsement/list</div><div class="a" style="left:1210px;top:795px;width:132px;height:28px;background:#fdd33b;"></div><div class="a" style="left:776.0px;width:1000px;text-align:center;top:802.2px;font-size:11.6px;line-height:1;color:#222;white-space:nowrap;">0.331</div><div class="a" style="left:375.0px;width:1000px;text-align:center;top:802.1px;font-size:11.7px;line-height:1;color:#333;white-space:nowrap;">HTTP:Request</div><div class="a" style="left:987.5px;top:802.1px;font-size:11.65px;line-height:1;color:#333;white-space:nowrap;">01/12/2023 01:16:47.512 AM PST</div><div class="a" style="left:917.0px;width:1000px;text-align:center;top:802.2px;font-size:11.6px;line-height:1;color:#333;white-space:nowrap;">0.158</div><div class="a" style="left:1545.0px;top:802.2px;font-size:11.6px;line-height:1;color:#333;white-space:nowrap;">0.</div><svg class="a" style="left:313.4px;top:800.5px" width="17" height="15" viewBox="0 0 17 15"><rect x="0" y="1.2" width="17" height="2.4" fill="#626262"/><rect x="0" y="7.1" width="17" height="2.4" fill="#626262"/><rect x="0" y="13" width="17" height="2.4" fill="#626262"/></svg><svg class="a" style="left:338px;top:799.2px" width="18" height="18"><use href="#chr"/></svg><svg class="a" style="left:360px;top:802px" width="12" height="12" viewBox="0 0 12 12"><circle cx="6" cy="6" r="6" fill="#1b1b1b"/><circle cx="6" cy="3.12" r="1.02" fill="#fff"/><path d="M4.08 4.80 H6.72 V8.70 H7.80 V9.72 H4.20 V8.70 H5.28 V5.88 H4.08Z" fill="#fff"/></svg><div class="a" style="left:376.0px;top:801.8px;font-size:12.1px;line-height:1;color:#222;white-space:nowrap;font-weight:bold;letter-spacing:-0.6px;">[B]</div><div class="a" style="left:394.0px;top:801.8px;font-size:12.1px;line-height:1;color:#333;white-space:nowrap;letter-spacing:-0.05px;">xmlhttprequest - /metadata/datalineage/impactAnalysis/models/1192750/r...</div><div class="a" style="left:1210px;top:825px;width:132px;height:28px;background:#fdd33b;"></div><div class="a" style="left:776.0px;width:1000px;text-align:center;top:832.2px;font-size:11.6px;line-height:1;color:#222;white-space:nowrap;">0.041</div><div class="a" style="left:375.0px;width:1000px;text-align:center;top:832.1px;font-size:11.7px;line-height:1;color:#333;white-space:nowrap;">HTTP:Script</div><div class="a" style="left:987.5px;top:832.1px;font-size:11.65px;line-height:1;color:#333;white-space:nowrap;">01/12/2023 01:16:47.882 AM PST</div><div class="a" style="left:917.0px;width:1000px;text-align:center;top:832.2px;font-size:11.6px;line-height:1;color:#333;white-space:nowrap;">0.002</div><div class="a" style="left:1545.0px;top:832.2px;font-size:11.6px;line-height:1;color:#333;white-space:nowrap;">0.</div><svg class="a" style="left:313.4px;top:830.5px" width="17" height="15" viewBox="0 0 17 15"><rect x="0" y="1.2" width="17" height="2.4" fill="#626262"/><rect x="0" y="7.1" width="17" height="2.4" fill="#626262"/><rect x="0" y="13" width="17" height="2.4" fill="#626262"/></svg><svg class="a" style="left:338px;top:829.2px" width="18" height="18"><use href="#chr"/></svg><svg class="a" style="left:360px;top:832px" width="12" height="12" viewBox="0 0 12 12"><circle cx="6" cy="6" r="6" fill="#1b1b1b"/><circle cx="6" cy="3.12" r="1.02" fill="#fff"/><path d="M4.08 4.80 H6.72 V8.70 H7.80 V9.72 H4.20 V8.70 H5.28 V5.88 H4.08Z" fill="#fff"/></svg><div class="a" style="left:376.0px;top:831.8px;font-size:12.1px;line-height:1;color:#222;white-space:nowrap;font-weight:bold;letter-spacing:-0.6px;">[B]</div><div class="a" style="left:394.0px;top:831.8px;font-size:12.1px;line-height:1;color:#333;white-space:nowrap;letter-spacing:-0.05px;">script - /resource/powerbiwfe/scripts/web.artifact-actions.min.a4c18588fb...</div><div class="a" style="left:1210px;top:855px;width:132px;height:28px;background:#fdd33b;"></div><div class="a" style="left:776.0px;width:1000px;text-align:center;top:862.2px;font-size:11.6px;line-height:1;color:#222;white-space:nowrap;">0.040</div><div class="a" style="left:375.0px;width:1000px;text-align:center;top:862.1px;font-size:11.7px;line-height:1;color:#333;white-space:nowrap;">HTTP:Script</div><div class="a" style="left:987.5px;top:862.1px;font-size:11.65px;line-height:1;color:#333;white-space:nowrap;">01/12/2023 01:16:47.028 AM PST</div><div class="a" style="left:917.0px;width:1000px;text-align:center;top:862.2px;font-size:11.6px;line-height:1;color:#333;white-space:nowrap;">0.001</div><div class="a" style="left:1545.0px;top:862.2px;font-size:11.6px;line-height:1;color:#333;white-space:nowrap;">0.</div><svg class="a" style="left:313.4px;top:860.5px" width="17" height="15" viewBox="0 0 17 15"><rect x="0" y="1.2" width="17" height="2.4" fill="#626262"/><rect x="0" y="7.1" width="17" height="2.4" fill="#626262"/><rect x="0" y="13" width="17" height="2.4" fill="#626262"/></svg><svg class="a" style="left:338px;top:859.2px" width="18" height="18"><use href="#chr"/></svg><svg class="a" style="left:360px;top:862px" width="12" height="12" viewBox="0 0 12 12"><circle cx="6" cy="6" r="6" fill="#1b1b1b"/><circle cx="6" cy="3.12" r="1.02" fill="#fff"/><path d="M4.08 4.80 H6.72 V8.70 H7.80 V9.72 H4.20 V8.70 H5.28 V5.88 H4.08Z" fill="#fff"/></svg><div class="a" style="left:376.0px;top:861.8px;font-size:12.1px;line-height:1;color:#222;white-space:nowrap;font-weight:bold;letter-spacing:-0.6px;">[B]</div><div class="a" style="left:394.0px;top:861.8px;font-size:12.1px;line-height:1;color:#333;white-space:nowrap;letter-spacing:-0.05px;">script - /resource/powerbiwfe/scripts/web.dataset-related-reports.min.5cd...</div><div class="a" style="left:1210px;top:885px;width:132px;height:28px;background:#fdd33b;"></div><div class="a" style="left:776.0px;width:1000px;text-align:center;top:892.2px;font-size:11.6px;line-height:1;color:#222;white-space:nowrap;">0.039</div><div class="a" style="left:375.0px;width:1000px;text-align:center;top:892.1px;font-size:11.7px;line-height:1;color:#333;white-space:nowrap;">HTTP:Image</div><div class="a" style="left:987.5px;top:892.1px;font-size:11.65px;line-height:1;color:#333;white-space:nowrap;">01/12/2023 01:16:47.150 AM PST</div><div class="a" style="left:917.0px;width:1000px;text-align:center;top:892.2px;font-size:11.6px;line-height:1;color:#333;white-space:nowrap;">0.001</div><div class="a" style="left:1545.0px;top:892.2px;font-size:11.6px;line-height:1;color:#333;white-space:nowrap;">0.</div><svg class="a" style="left:313.4px;top:890.5px" width="17" height="15" viewBox="0 0 17 15"><rect x="0" y="1.2" width="17" height="2.4" fill="#626262"/><rect x="0" y="7.1" width="17" height="2.4" fill="#626262"/><rect x="0" y="13" width="17" height="2.4" fill="#626262"/></svg><svg class="a" style="left:338px;top:889.2px" width="18" height="18"><use href="#chr"/></svg><svg class="a" style="left:360px;top:892px" width="12" height="12" viewBox="0 0 12 12"><circle cx="6" cy="6" r="6" fill="#1b1b1b"/><circle cx="6" cy="3.12" r="1.02" fill="#fff"/><path d="M4.08 4.80 H6.72 V8.70 H7.80 V9.72 H4.20 V8.70 H5.28 V5.88 H4.08Z" fill="#fff"/></svg><div class="a" style="left:376.0px;top:891.8px;font-size:12.1px;line-height:1;color:#222;white-space:nowrap;font-weight:bold;letter-spacing:-0.6px;">[B]</div><div class="a" style="left:394.0px;top:891.8px;font-size:12.1px;line-height:1;color:#333;white-space:nowrap;letter-spacing:-0.05px;">other - /images/PowerBI_Favicon.ico</div><div class="a" style="left:1210px;top:915px;width:132px;height:6px;background:#fdd33b;"></div><div class="a" style="left:338px;top:919.5px;width:18px;height:1.5px;overflow:hidden"><svg width="18" height="18" style="position:absolute;left:0;top:0"><use href="#chr"/></svg></div><div class="a" style="left:1630px;top:714px;width:528px;height:9.5px;background:#aaa6a9;"></div><div class="a" style="left:1681px;top:744px;width:70px;height:9.5px;background:#888888;"></div><div class="a" style="left:1751px;top:744px;width:91px;height:9.5px;background:#3aa648;"></div><div class="a" style="left:1842px;top:744px;width:1px;height:9.5px;background:#5577dd;"></div><svg class="a" style="left:0px;top:900px" width="2215" height="188" viewBox="0 900 2215 188"><path d="M335 1061.2 H2171" stroke="#c9d3e6" stroke-width="1"/><path d="M1870.5 1061.5 V1066" stroke="#c9d3e6" stroke-width="1"/><rect x="509.4" y="942" width="578.9" height="119.2" fill="#fdd33b"/><path d="M509.4 1061 V942 H1088.3 V1061" fill="none" stroke="#000" stroke-width="1"/><rect x="1099.3" y="953.5" width="523.6" height="107.7" fill="#fdd33b"/><path d="M1099.3 1061 V953.5 H1622.9 V1061" fill="none" stroke="#000" stroke-width="1"/><rect x="1637.9" y="951" width="532.8" height="110.2" fill="#fdd33b"/><path d="M1637.9 1061 V951 H2170.7 V1061" fill="none" stroke="#000" stroke-width="1"/><rect x="334.9" y="1048.3" width="62.8" height="12.9" fill="#fdd33b"/><path d="M334.9 1048.3 H397.7 V1061" fill="none" stroke="#000" stroke-width="1"/><rect x="484.3" y="1049.2" width="30.0" height="12.0" fill="#fdd33b"/><path d="M484.3 1061 V1049.2 H514.3 V1061" fill="none" stroke="#000" stroke-width="1"/><rect x="543.8" y="1048.3" width="44.8" height="12.9" fill="#fdd33b"/><path d="M543.8 1061 V1048.3 H588.6 V1061" fill="none" stroke="#000" stroke-width="1"/><rect x="514.3" y="1050.2" width="54.4" height="11.0" fill="#fdd33b"/><path d="M514.3 1061 V1050.2 H568.7 V1061" fill="none" stroke="#000" stroke-width="1"/><rect x="1683.3" y="1048.6" width="65.2" height="12.6" fill="#fdd33b"/><path d="M1683.3 1061 V1048.6 H1748.5 V1061" fill="none" stroke="#000" stroke-width="1"/><rect x="1702.4" y="1050.2" width="56.1" height="11.0" fill="#fdd33b"/><path d="M1702.4 1061 V1050.2 H1758.5 V1061" fill="none" stroke="#000" stroke-width="1"/><rect x="1704.3" y="1050.8" width="52.1" height="10.4" fill="#fdd33b"/><path d="M1704.3 1061 V1050.8 H1756.4 V1061" fill="none" stroke="#000" stroke-width="1"/><rect x="1865.4" y="1050.2" width="52.1" height="11.0" fill="#fdd33b"/><path d="M1865.4 1061 V1050.2 H1917.5 V1061" fill="none" stroke="#000" stroke-width="1"/><path d="M527 1048.8 H543.8" stroke="#000" stroke-width="2"/></svg><div class="a" style="left:303.0px;top:925.3px;font-size:11.5px;line-height:1;color:#555;white-space:nowrap;">0.4</div><div class="a" style="left:303.0px;top:990.3px;font-size:11.5px;line-height:1;color:#555;white-space:nowrap;">0.2</div><div class="a" style="left:313.0px;top:1055.3px;font-size:11.5px;line-height:1;color:#555;white-space:nowrap;">0</div><div class="a" style="left:1846.4px;top:1070.5px;font-size:10px;line-height:1;color:#555;white-space:nowrap;">1:16:48 am</div><div class="a" style="left:232px;top:990px;width:110px;height:14px;transform:rotate(-90deg);font-size:12px;line-height:14px;color:#666;letter-spacing:0.5px;white-space:nowrap;text-align:center">Duration (seconds)</div><div class="a" style="left:1555px;top:754px;width:650px;height:180px;background:#fff;border:1px solid #e3e3e3;border-radius:5px;box-shadow:0 1px 3px rgba(0,0,0,0.12)"></div><div class="a" style="left:1571.0px;top:764.7px;font-size:14.4px;line-height:1;color:#333;white-space:nowrap;">Stalled Duration (s)</div><svg class="a" style="left:1703.4px;top:764.4px" width="13.2" height="13.2" viewBox="0 0 13.2 13.2"><circle cx="6.6" cy="6.6" r="6.6" fill="#1b1b1b"/><circle cx="6.6" cy="3.43" r="1.12" fill="#fff"/><path d="M4.49 5.28 H7.39 V9.57 H8.58 V10.69 H4.62 V9.57 H5.81 V6.47 H4.49Z" fill="#fff"/></svg><div class="a" style="left:2094.0px;top:764.7px;font-size:14.4px;line-height:1;color:#333;white-space:nowrap;">0.159</div><div class="a" style="left:1571.0px;top:784.7px;font-size:14.4px;line-height:1;color:#333;white-space:nowrap;">Redirect Duration (s)</div><svg class="a" style="left:1713.4px;top:784.4px" width="13.2" height="13.2" viewBox="0 0 13.2 13.2"><circle cx="6.6" cy="6.6" r="6.6" fill="#1b1b1b"/><circle cx="6.6" cy="3.43" r="1.12" fill="#fff"/><path d="M4.49 5.28 H7.39 V9.57 H8.58 V10.69 H4.62 V9.57 H5.81 V6.47 H4.49Z" fill="#fff"/></svg><div class="a" style="left:2094.0px;top:784.7px;font-size:14.4px;line-height:1;color:#333;white-space:nowrap;">0</div><div class="a" style="left:1571.0px;top:804.7px;font-size:14.4px;line-height:1;color:#333;white-space:nowrap;">DNS Duration (s)</div><svg class="a" style="left:1688.1000000000001px;top:804.4px" width="13.2" height="13.2" viewBox="0 0 13.2 13.2"><circle cx="6.6" cy="6.6" r="6.6" fill="#1b1b1b"/><circle cx="6.6" cy="3.43" r="1.12" fill="#fff"/><path d="M4.49 5.28 H7.39 V9.57 H8.58 V10.69 H4.62 V9.57 H5.81 V6.47 H4.49Z" fill="#fff"/></svg><div class="a" style="left:2094.0px;top:804.7px;font-size:14.4px;line-height:1;color:#333;white-space:nowrap;">0</div><div class="a" style="left:1571.0px;top:824.7px;font-size:14.4px;line-height:1;color:#333;white-space:nowrap;">Connect Duration (s)</div><svg class="a" style="left:1713.4px;top:824.4px" width="13.2" height="13.2" viewBox="0 0 13.2 13.2"><circle cx="6.6" cy="6.6" r="6.6" fill="#1b1b1b"/><circle cx="6.6" cy="3.43" r="1.12" fill="#fff"/><path d="M4.49 5.28 H7.39 V9.57 H8.58 V10.69 H4.62 V9.57 H5.81 V6.47 H4.49Z" fill="#fff"/></svg><div class="a" style="left:2094.0px;top:824.7px;font-size:14.4px;line-height:1;color:#333;white-space:nowrap;">0</div><div class="a" style="left:1571.0px;top:844.7px;font-size:14.4px;line-height:1;color:#333;white-space:nowrap;">Wait Duration (TTFB) (s)</div><svg class="a" style="left:1732.2px;top:844.4px" width="13.2" height="13.2" viewBox="0 0 13.2 13.2"><circle cx="6.6" cy="6.6" r="6.6" fill="#1b1b1b"/><circle cx="6.6" cy="3.43" r="1.12" fill="#fff"/><path d="M4.49 5.28 H7.39 V9.57 H8.58 V10.69 H4.62 V9.57 H5.81 V6.47 H4.49Z" fill="#fff"/></svg><div class="a" style="left:2094.0px;top:844.7px;font-size:14.4px;line-height:1;color:#333;white-space:nowrap;">0.206</div><div class="a" style="left:1571.0px;top:864.7px;font-size:14.4px;line-height:1;color:#333;white-space:nowrap;">Download Duration (s)</div><svg class="a" style="left:1725.4px;top:864.4px" width="13.2" height="13.2" viewBox="0 0 13.2 13.2"><circle cx="6.6" cy="6.6" r="6.6" fill="#1b1b1b"/><circle cx="6.6" cy="3.43" r="1.12" fill="#fff"/><path d="M4.49 5.28 H7.39 V9.57 H8.58 V10.69 H4.62 V9.57 H5.81 V6.47 H4.49Z" fill="#fff"/></svg><div class="a" style="left:2094.0px;top:864.7px;font-size:14.4px;line-height:1;color:#333;white-space:nowrap;">0.001</div><div class="a" style="left:1571.0px;top:884.7px;font-size:14.4px;line-height:1;color:#333;white-space:nowrap;">SSL Connect Duration (s)</div><svg class="a" style="left:1739.4px;top:884.4px" width="13.2" height="13.2" viewBox="0 0 13.2 13.2"><circle cx="6.6" cy="6.6" r="6.6" fill="#1b1b1b"/><circle cx="6.6" cy="3.43" r="1.12" fill="#fff"/><path d="M4.49 5.28 H7.39 V9.57 H8.58 V10.69 H4.62 V9.57 H5.81 V6.47 H4.49Z" fill="#fff"/></svg><div class="a" style="left:2094.0px;top:884.7px;font-size:14.4px;line-height:1;color:#333;white-space:nowrap;">0</div><div class="a" style="left:1789px;top:767px;width:131px;height:10px;background:#888;"></div><div class="a" style="left:1919.5px;top:787px;width:1.2px;height:10px;background:#2255cc;"></div><div class="a" style="left:1919.5px;top:807px;width:1.2px;height:10px;background:#33cc77;"></div><div class="a" style="left:1919.5px;top:827px;width:1.2px;height:10px;background:#e8a0b8;"></div><div class="a" style="left:1920px;top:847px;width:168px;height:10px;background:#3aa648;"></div><div class="a" style="left:2086.5px;top:867px;width:1.2px;height:10px;background:#3399dd;"></div><div class="a" style="left:2086.5px;top:887px;width:1.2px;height:10px;background:#aa88cc;"></div><div class="a" style="left:1571.0px;top:906.4px;font-size:16.7px;line-height:1;color:#222;white-space:nowrap;font-weight:bold;">Duration (s)</div><div class="a" style="left:2076.0px;top:907.0px;font-size:16px;line-height:1;color:#222;white-space:nowrap;font-weight:bold;">0.366</div></div></body></html>
